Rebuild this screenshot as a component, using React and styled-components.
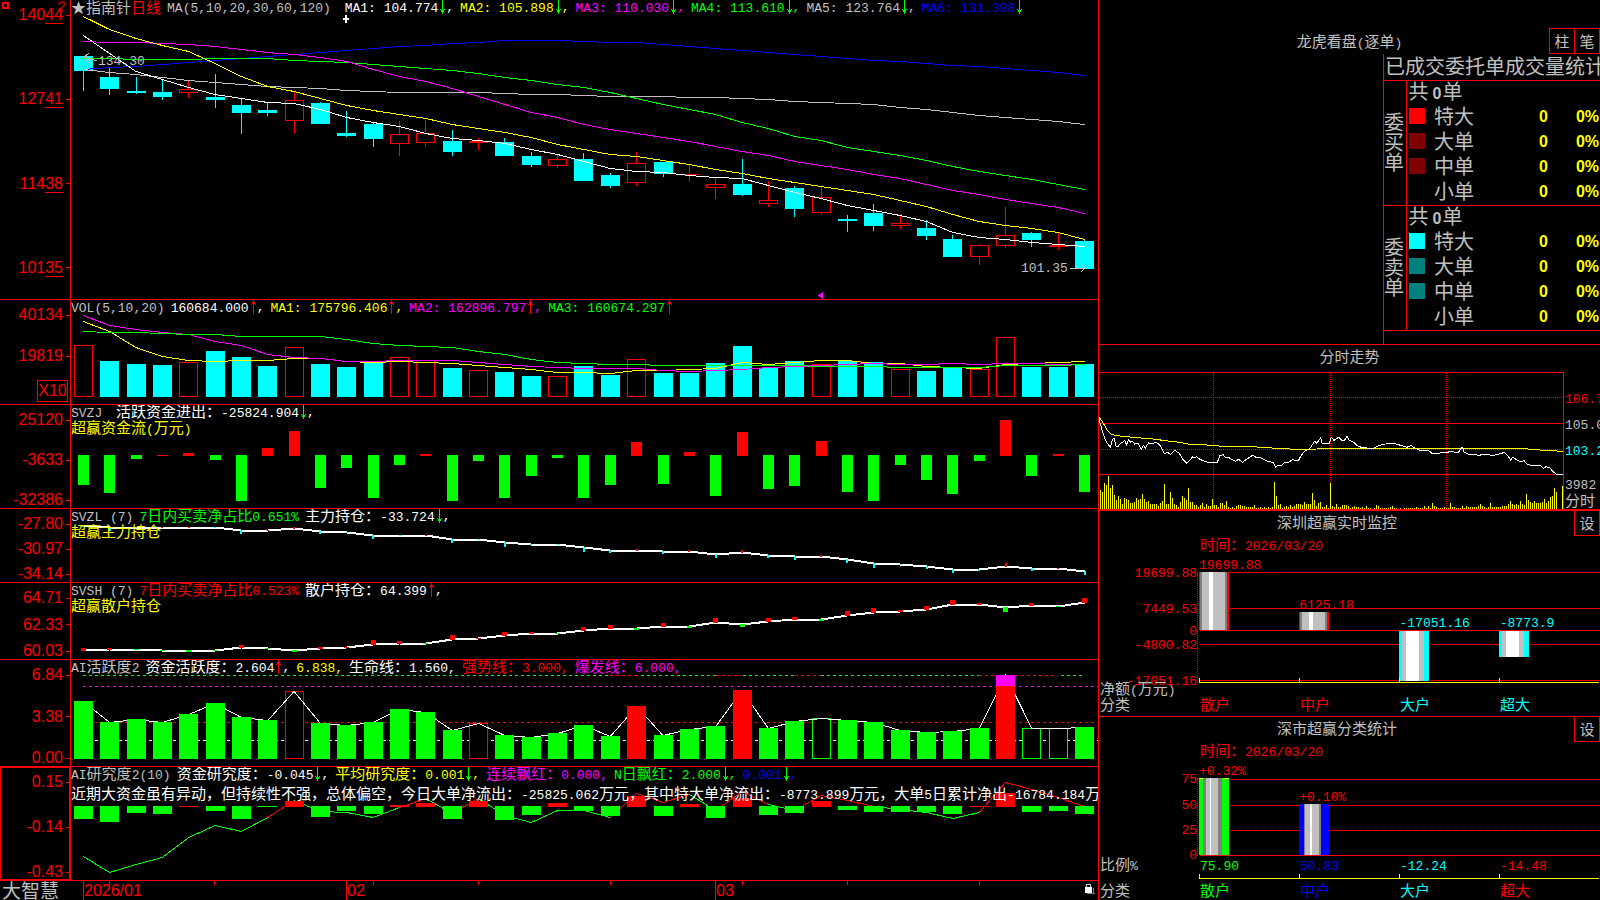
import styled, { createGlobalStyle } from "styled-components"

const GlobalStyle = createGlobalStyle`
  * {
    box-sizing: border-box;
  }
  body {
    margin: 0;
    background-color: #000;
    color: #c0c0c0;
    font-family: "Noto Sans CJK SC", sans-serif;
    font-size: 15px;
    line-height: 15px;
    overflow-x: hidden;
  }
`;

const Page = styled.div`
  display: grid;
  grid-template-columns: minmax(0, 1099fr) minmax(0, 501fr);
  width: 100%;
`;

const Left = styled.main`
  border-right: 1px solid #f00;
`;

const Right = styled.aside`
  display: flex;
  flex-direction: column;
`;

// left side

const ChartRow = styled.section`
  display: grid;
  grid-template-columns: 71px minmax(0, 1fr);
  height: ${(p) => p.$height}px;
  border-bottom: 1px solid #f00;
`;

const Axis = styled.div`
  position: relative;
  display: flex;
  flex-direction: column;
  justify-content: ${(p) => (p.$gap ? "flex-start" : "space-between")};
  gap: ${(p) => p.$gap || 0}px;
  padding: 7px 0 ${(p) => p.$bottom || 0}px;
  border-right: 1px solid #f00;
  box-shadow: ${(p) => (p.$active ? "inset 0 0 0 1px #f00" : "none")};
`;

const AxisLabel = styled.div`
  display: flex;
  align-items: center;
  justify-content: flex-end;
  height: 16px;
  color: #f00;
  font-family: "Liberation Sans", sans-serif;
  font-size: 16px;
  line-height: 18px;

  u {
    text-decoration: none;
    border-bottom: 1px solid #f00;
  }

  &::after {
    content: "";
    width: 4px;
    height: 1px;
    margin-left: 3px;
    background-color: #f00;
  }
`;

const Unit = styled.div`
  align-self: flex-end;
  width: 31px;
  height: 22px;
  margin: -9px 2px 0 0;
  border: 1px solid #f00;
  color: #f00;
  font-family: "Liberation Sans", sans-serif;
  font-size: 16px;
  line-height: 20px;
  text-align: center;
`;

const Corner = styled.div`
  position: absolute;
  top: 2px;
  left: 2px;
  width: 7px;
  height: 7px;
  border: 2px solid #f00;
`;

const Help = styled.div`
  position: absolute;
  top: 1px;
  left: 57px;
  color: #a00000;
  font-family: "Liberation Mono", monospace;
  font-size: 16px;
  font-weight: bold;
`;

const Plot = styled.div`
  position: relative;
  overflow: hidden;
`;

const Canvas = styled.svg`
  position: absolute;
  inset: 0;
  width: 100%;
  height: 100%;
  shape-rendering: crispEdges;
`;

const Captions = styled.div`
  position: relative;
  display: flex;
  gap: 6px;
  height: 14px;
  line-height: 14px;
  white-space: pre;
`;

const Caption = styled.span`
  display: flex;
  align-items: center;
  color: ${(p) => p.$color || "#c0c0c0"};
`;

const SubCaption = styled.div`
  position: relative;
  margin-top: ${(p) => p.$gap || 0}px;
  color: ${(p) => p.$color};
  white-space: nowrap;
`;

const Latin = styled.span`
  font-family: "Liberation Mono", monospace;
  font-size: 13px;
  line-height: 13px;
`;

const ArrowIcon = styled.svg`
  flex: none;
  width: 8px;
  height: 14px;
  shape-rendering: crispEdges;
`;

const PriceTag = styled.div`
  position: absolute;
  top: ${(p) => p.$top}px;
  left: ${(p) => p.$left};
  display: flex;
  align-items: center;
`;

const TimeRow = styled.footer`
  display: grid;
  grid-template-columns: 71px minmax(0, 1fr);
  height: 19px;
`;

const Brand = styled.div`
  padding-left: 2px;
  font-size: 19px;
  line-height: 17px;
  white-space: nowrap;
`;

const Months = styled.div`
  position: relative;
  display: grid;
  grid-template-columns: 12fr 263fr 369fr 369fr 14px;
`;

const Month = styled.div`
  border-left: 1px solid #f00;
  color: #f00;
  font-family: "Liberation Sans", sans-serif;
  font-size: 16px;
  line-height: 19px;
`;

const LockIcon = styled.svg`
  width: 11px;
  height: 12px;
  margin-top: 2px;
`;

// right side

const OrderPanel = styled.section`
  height: 345px;
  padding-top: 28px;
  border-bottom: 1px solid #f00;
  display: flex;
  flex-direction: column;
  overflow: hidden;
`;

const TitleBar = styled.div`
  display: grid;
  align-items: start;
  height: 26px;
  grid-template-columns: ${(p) => (p.$split ? "minmax(0, 1fr) auto" : "minmax(0, 1fr)")};
`;

const Title = styled.h2`
  margin: 0;
  font-size: 15px;
  font-weight: normal;
  line-height: ${(p) => (p.$over ? 26 : 22)}px;
  text-align: center;
  ${(p) => p.$over && "grid-area: 1 / 1;"}
`;

const Buttons = styled.div`
  display: flex;
  justify-self: end;
  ${(p) => p.$over && "grid-area: 1 / 1;"}
`;

const Button = styled.button`
  width: 26px;
  height: 26px;
  margin-left: -1px;
  padding: 0;
  border: 1px solid #f00;
  background-color: #000;
  color: #c0c0c0;
  font-family: inherit;
  font-size: 15px;
  line-height: 20px;
  cursor: pointer;
`;

const FundButton = styled(Button)`
  margin-top: -1px;
`;

const Orders = styled.div`
  flex: 1;
  align-self: flex-end;
  width: 217px;
  border-left: 1px solid #f00;
`;

const OrdersTitle = styled.h3`
  height: 26px;
  margin: 0;
  padding-left: 1px;
  font-size: 20px;
  font-weight: normal;
  line-height: 24px;
  white-space: nowrap;
`;

const OrderTable = styled.table`
  width: 100%;
  table-layout: fixed;
  border-collapse: collapse;

  td, th {
    height: 25px;
    padding: 0;
    font-size: 20px;
    font-weight: normal;
    line-height: 20px;
    text-align: left;
    vertical-align: top;
  }

  tbody {
    border-top: 1px solid #f00;
    border-bottom: 1px solid #f00;
  }
`;

const Side = styled.th`
  border-right: 1px solid #f00;

  && {
    padding-top: 31px;
  }

  span {
    display: block;
    width: 20px;
    line-height: 20px;
  }
`;

const Total = styled.td`
  && {
    padding-left: 2px;
  }

  span {
    padding: 0 1px 0 4px;
    font-family: "Liberation Sans", sans-serif;
    font-size: 16px;
    font-weight: bold;
    line-height: 16px;
  }
`;

const Num = styled.td`
  && {
    color: #ff0;
    font-family: "Liberation Sans", sans-serif;
    font-size: 16px;
    font-weight: bold;
    line-height: 22px;
    text-align: right;
  }

  &:last-child {
    padding-right: 1px;
  }
`;

const Swatch = styled.i`
  display: block;
  width: 16px;
  height: 16px;
  margin: 2px 0 0 2px;
  background-color: ${(p) => p.$color};
`;

const TrendPanel = styled.section`
  height: 166px;
  border-bottom: 2px solid #f00;
`;

const TrendBody = styled.div`
  display: grid;
  grid-template-columns: minmax(0, 1fr) 36px;
  height: 137px;
  margin-top: 1px;
`;

const TrendPlot = styled.div`
  position: relative;
  border: 1px solid #f00;
  border-width: 1px 1px 0 0;
`;

const TrendScale = styled.div`
  display: grid;
  grid-template-rows: 26px 26px 34px 17px;
  padding: 17px 0 0 1px;
  overflow: hidden;
  white-space: nowrap;
`;

const Tint = styled.span`
  color: ${(p) => p.$color};
`;

const FundPanel = styled.section`
  border-bottom: ${(p) => (p.$last ? "none" : "1px solid #f00")};
  height: ${(p) => p.$height}px;
  overflow: hidden;
`;

const DateLine = styled.div`
  height: 16px;
  padding-left: 101px;
  color: #f00;
  line-height: 14px;
`;

const FundBody = styled.div`
  display: grid;
  grid-template-columns: 98px minmax(0, 1fr);
  margin-top: ${(p) => p.$gap}px;
`;

const FundScale = styled.div`
  display: grid;
  height: 0;
  grid-template-rows: ${(p) => p.$rows};
  margin-top: -9px;
  color: #f00;
  text-align: right;
  line-height: 16px;
`;

const FundPlot = styled.div`
  position: relative;
  height: ${(p) => p.$height}px;
  border-left: 1px dotted #f00;
`;

const Tags = styled.div`
  position: absolute;
  inset: 0;
  display: grid;
  grid-template-columns: repeat(4, minmax(0, 1fr));
  padding-left: 1px;
`;

const Tag = styled.span`
  margin-top: ${(p) => p.$top}px;
  color: ${(p) => p.$color};
`;

const Legend = styled.div`
  display: grid;
  grid-template-columns: 101px minmax(0, 1fr);
  height: 16px;
  line-height: 14px;
  margin-top: ${(p) => p.$gap || 0}px;
  white-space: nowrap;
`;

const LegendName = styled.span`
  position: relative;
  padding-left: 1px;
`;

const Cells = styled.div`
  display: grid;
  grid-template-columns: repeat(4, minmax(0, 1fr));
`;

const Ruler = styled.svg`
  display: block;
  width: 100%;
  height: 5px;
  shape-rendering: crispEdges;
`;

const RulerBox = styled.div`
  position: relative;
  margin: ${(p) => p.$gap || 0}px 0 0 100px;
`;

// data

const CYAN = "#0ff";
const RED = "#f00";
const LIME = "#0f0";
const PINK = "#f0f";
const YELLOW = "#ff0";
const WHITE = "#fff";
const BLUE = "#00f";
const GREY = "#c0c0c0";
const DARK = "#808080";

// [up, high, top, bottom, low]
const candles = [
  [0, 56, 56, 71, 91], [0, 68, 77, 89, 95], [0, 77, 91, 93, 94], [0, 79, 92, 97, 100],
  [1, 81, 89, 93, 98], [0, 74, 97, 100, 108], [0, 99, 105, 113, 134], [0, 103, 110, 113, 116],
  [1, 91, 100, 121, 133], [0, 102, 103, 124, 124], [0, 111, 133, 136, 137], [0, 122, 124, 139, 147],
  [1, 121, 134, 144, 156], [1, 120, 133, 143, 147], [0, 130, 141, 152, 156], [1, 138, 141, 143, 150],
  [0, 138, 142, 156, 156], [0, 152, 156, 165, 167], [1, 154, 159, 166, 168], [0, 153, 159, 181, 181],
  [0, 173, 175, 186, 188], [1, 152, 163, 183, 186], [0, 162, 162, 174, 177], [1, 164, 174, 175, 182],
  [1, 178, 184, 188, 199], [0, 159, 184, 195, 196], [1, 181, 200, 204, 207], [0, 186, 188, 209, 217],
  [1, 186, 197, 213, 215], [0, 215, 219, 221, 232], [0, 204, 213, 226, 231], [1, 214, 223, 226, 229],
  [0, 220, 228, 236, 240], [0, 235, 239, 257, 257], [1, 244, 245, 257, 265], [1, 207, 235, 246, 248],
  [0, 232, 233, 240, 247], [1, 232, 245, 247, 250], [0, 239, 241, 269, 269],
];

const maLines = [
  [BLUE, [69, 67, 66, 64, 62, 60, 58, 56, 54, 52, 50, 48, 46, 45, 43, 42, 40, 40, 40, 41, 42, 42, 44, 46, 48, 50, 52, 54, 56, 58, 60, 61, 63, 65, 66, 68, 70, 72, 75]],
  [GREY, [69, 72, 74, 77, 80, 82, 84, 86, 87, 88, 90, 91, 92, 92, 92, 92, 93, 94, 94, 95, 96, 96, 96, 97, 97, 98, 99, 101, 102, 103, 104, 107, 109, 112, 115, 117, 119, 121, 124]],
  [LIME, [58, 58, 59, 59, 59, 58, 58, 58, 60, 61, 62, 64, 66, 68, 70, 73, 77, 80, 84, 87, 92, 98, 104, 109, 114, 122, 128, 136, 140, 147, 151, 155, 160, 166, 171, 175, 179, 184, 189]],
  [PINK, [41, 42, 42, 43, 44, 46, 49, 52, 54, 57, 61, 69, 76, 81, 88, 96, 104, 112, 117, 124, 129, 133, 137, 141, 146, 151, 155, 161, 165, 169, 174, 178, 184, 190, 194, 199, 203, 207, 213]],
  [YELLOW, [16, 29, 38, 45, 51, 63, 76, 86, 91, 98, 105, 110, 114, 118, 124, 128, 132, 137, 144, 149, 154, 156, 160, 164, 169, 173, 178, 182, 186, 190, 194, 200, 206, 214, 221, 225, 228, 232, 239]],
  [WHITE, [35, 53, 71, 79, 87, 94, 98, 102, 103, 109, 117, 122, 126, 133, 138, 140, 143, 149, 154, 161, 168, 171, 172, 175, 177, 178, 185, 192, 198, 205, 210, 215, 221, 232, 237, 239, 242, 244, 246]],
];

const volumes = [45, 61, 64, 65, 62, 51, 57, 66, 47, 64, 67, 63, 57, 60, 68, 70, 72, 76, 76, 66, 75, 59, 73, 73, 63, 46, 68, 61, 64, 61, 62, 69, 71, 68, 69, 37, 67, 67, 64];
const volumeUp = [0, 4, 8, 12, 13, 15, 18, 21, 28, 31, 34, 35];
const volumeLines = [
  [YELLOW, [21, 31, 47, 56, 60, 61, 60, 60, 58, 58, 61, 62, 61, 62, 63, 65, 67, 69, 72, 72, 73, 70, 70, 69, 68, 62, 64, 62, 60, 60, 63, 63, 66, 67, 68, 64, 63, 62, 61]],
  [PINK, [15, 25, 29, 32, 34, 41, 45, 54, 57, 58, 61, 61, 60, 60, 60, 62, 64, 66, 67, 68, 68, 68, 70, 71, 70, 69, 67, 66, 65, 64, 63, 64, 64, 63, 64, 63, 63, 64, 64]],
  [LIME, [31, 32, 32, 33, 34, 34, 36, 36, 36, 36, 39, 43, 45, 46, 47, 51, 54, 59, 62, 63, 64, 64, 65, 65, 65, 65, 65, 65, 66, 66, 66, 67, 67, 67, 67, 65, 65, 65, 64]],
];

const flows = [-30, -38, -4, 1, 3, -5, -46, 8, 25, -33, -13, -43, -10, 2, -46, -6, -43, -21, -3, -43, -30, 14, -29, 4, -41, 24, -34, -31, 15, -37, -46, -10, -25, -39, -6, 36, -21, 2, -37];

const mainHold = [16, 18, 18, 18, 18, 18, 21, 21, 19, 22, 23, 26, 26, 26, 30, 30, 33, 35, 35, 38, 41, 41, 42, 42, 45, 43, 46, 47, 47, 50, 54, 55, 57, 60, 60, 57, 59, 59, 62];
const mainMarks = [-2, -4, -1, 1, 1, -1, -4, 1, 2, -3, -1, -4, -1, 1, -4, -1, -5, -1, -1, -5, -3, 2, -3, 2, -4, 3, -3, -4, 2, -4, -5, -1, -3, -4, -2, 4, -3, 1, -4];
const retailHold = [67, 66, 66, 67, 67, 67, 64, 65, 67, 65, 64, 61, 60, 60, 56, 55, 52, 50, 50, 47, 45, 45, 43, 43, 39, 41, 38, 36, 36, 32, 29, 28, 26, 21, 21, 24, 22, 23, 19];
const retailMarks = [3, 2, -1, -1, -2, -1, 3, -1, -2, 2, 1, 5, 3, -1, 5, 1, 4, 2, -1, 4, 4, -2, 4, -2, 5, -3, 4, 3, -2, 5, 5, 2, 4, 5, 2, -5, 3, -1, 5];

const active = [41, 62, 59, 62, 54, 43, 57, 60, 31, 63, 65, 62, 49, 52, 70, 63, 75, 77, 73, 65, 76, 46, 75, 69, 66, 30, 68, 61, 58, 60, 62, 70, 72, 71, 68, 15, 68, 68, 67];
const activeHollow = { 8: RED, 15: RED, 28: LIME, 36: LIME, 37: LIME };
const activeRed = [21, 25, 35];

const research = [-13, -16, -7, -8, 1, -5, -13, -1, 6, -11, -5, -8, 2, 4, -13, 6, -14, -9, 4, -5, -10, 11, -10, 3, -12, 9, -9, -7, 6, -4, -6, -6, -6, -8, 1, 14, -6, -5, -8];
const researchLine = [89, 105, 97, 90, 70, 58, 64, 50, 33, 44, 45, 50, 40, 31, 46, 31, 48, 55, 43, 43, 50, 26, 35, 27, 43, 24, 37, 43, 28, 33, 39, 42, 45, 51, 45, 15, 22, 30, 39];
const researchRed = [7, 12, 14, 20, 21, 22, 24, 25, 27, 28, 29, 34, 35, 36, 37];

const price = "27,230 30,248 36,270 45,298 54,313 61,322 67,298 72,295 78,319 84,319 92,310 98,307 104,301 110,315 115,299 122,307 128,304 134,312 144,310 154,328 160,316 166,324 176,308 184,312 196,307 206,312 214,322 222,340 234,338 242,344 254,331 268,340 280,360 290,370 300,360 308,350 314,353 320,350 330,358 344,364 358,368 372,366 382,367 390,346 400,344 406,353 416,352 424,358 436,364 446,358 458,367 466,360 476,354 488,346 498,352 510,353 522,358 534,364 550,368 557,381 564,376 574,376 584,368 598,366 608,358 618,362 626,360 634,346 644,334 656,328 662,322 674,304 680,310 692,294 696,310 706,312 718,310 724,292 732,301 746,292 756,301 764,300 771,289 778,301 790,306 800,316 814,322 830,324 852,324 864,318 880,313 900,310 914,311 932,316 950,322 964,317 974,324 988,330 1000,333 1014,330 1026,340 1040,342 1054,338 1070,338 1084,333 1096,338 1106,336 1116,320 1122,336 1134,342 1156,342 1168,348 1176,342 1192,344 1210,346 1228,342 1244,337 1254,348 1262,360 1268,352 1278,358 1292,365 1302,362 1310,372 1330,378 1350,376 1360,385 1368,380 1380,384 1388,394 1398,402 1408,403 1419,403";
const average = "27,230 40,250 54,274 66,284 90,288 130,292 190,297 240,304 270,307 300,313 350,315 400,319 500,321 560,325 620,328 680,327 700,325 1000,325 1300,326 1330,328 1360,331 1400,333 1419,334";
const ticks = [
  57, 51, 77, 71, 99, 63, 71, 41, 27, 39, 29, 15, 33, 31, 27, 18, 18, 21, 33, 27, 29, 45, 29, 21, 23, 15, 15, 15, 15, 9, 17, 24, 75, 15, 15, 51, 33, 15, 12, 7,
  21, 39, 33, 27, 63, 21, 21, 12, 12, 7, 12, 18, 7, 15, 9, 9, 30, 12, 12, 7, 18, 18, 12, 24, 5, 3, 7, 3, 9, 12, 12, 9, 9, 6, 6, 6, 6, 12, 3, 3,
  6, 3, 6, 3, 6, 3, 6, 81, 39, 12, 15, 3, 6, 9, 6, 12, 6, 9, 15, 15, 15, 12, 21, 15, 15, 15, 48, 27, 9, 18, 21, 6, 6, 12, 3, 77,
  9, 6, 15, 6, 6, 12, 12, 12, 9, 3, 6, 9, 6, 6, 3, 6, 3, 9, 3, 3, 0, 3, 12, 9, 3, 3, 3, 3, 3, 6, 9, 3, 3, 0, 3, 0, 3, 3, 3, 3,
  3, 3, 6, 3, 3, 3, 9, 3, 9, 3, 18, 9, 6, 3, 3, 3, 6, 3, 3, 18, 6, 6, 3, 3, 3, 9, 3, 9, 6, 6, 6, 6, 6, 9, 15, 9, 6, 3, 6, 18, 6, 6,
  6, 6, 6, 9, 9, 9, 15, 24, 15, 12, 15, 12, 24, 15, 12, 45, 27, 21, 18, 24, 18, 18, 18, 21, 30, 18, 24, 36, 39, 63, 51, 0, 0, 69,
];

const x = (i) => 12.3 + i * 26.35;
const path = (ys, from = 0) => ys.map((y, i) => `${x(i + from)},${y + 0.5}`).join(" ");

// splits a string so half-width runs get the monospaced face
const Text = ({ children }) =>
  children.split(/([\x20-\x7e]+)/).map((part, i) => (i % 2 ? <Latin key={i}>{part}</Latin> : part));

const Arrow = ({ up }) => (
  <ArrowIcon viewBox="0 0 8 14" fill={up ? RED : LIME}>
    <rect x="4" width="1" height="14" />
    {up ? <path d="M3 2h3v2h-3zM2 4h1v1h-1zM6 4h1v1h-1z" /> : <path d="M3 10h3v2h-3zM2 9h1v1h-1zM6 9h1v1h-1z" />}
  </ArrowIcon>
);

const CaptionLine = ({ lead, items }) => (
  <Captions>
    {lead}
    {items.map(([text, color, arrow, tail]) => (
      <Caption key={text} $color={color}>
        <span><Text>{text}</Text></span>
        {arrow && <Arrow up={arrow === "up"} />}
        {tail && <Latin>{tail}</Latin>}
      </Caption>
    ))}
  </Captions>
);

const Chart = ({ height, children }) => (
  <Canvas viewBox={`0 0 1027 ${height}`} preserveAspectRatio="none" fill="none">
    {children}
  </Canvas>
);

const Lines = ({ lines }) => lines.map(([color, ys]) => <polyline key={color} points={path(ys)} stroke={color} />);

const Bar = ({ i, top, bottom, color, hollow, width = 19 }) => {
  const left = Math.round(x(i) - width / 2);
  return hollow ? (
    <rect x={left + 0.5} y={top + 0.5} width={width - 1} height={Math.max(bottom - top - 1, 1)} stroke={color} fill="#000" />
  ) : (
    <rect x={left} y={top} width={width} height={Math.max(bottom - top, 1)} fill={color} />
  );
};

const SignedBars = ({ values, zero, width }) =>
  values.map((v, i) => (
    <Bar key={i} i={i} width={width} color={v > 0 ? RED : LIME} top={v > 0 ? zero - v + 1 : zero} bottom={v > 0 ? zero + 1 : zero - v} />
  ));

const Marks = ({ line, marks, width, down }) =>
  marks.map((m, i) => (
    <Bar key={i} i={i} width={width} color={m > 0 ? RED : down} top={m > 0 ? line[i] - m + 1 : line[i]} bottom={m > 0 ? line[i] + 1 : line[i] - m} />
  ));

const Scale = ({ labels }) => labels.map((l) => <AxisLabel key={l}>{l}</AxisLabel>);

const PricePanel = () => (
  <ChartRow $height={300}>
    <Axis $bottom={23}>
      <Corner />
      <Help>?</Help>
      <AxisLabel><span>140<u>44</u></span></AxisLabel>
      <AxisLabel><span>127<u>41</u></span></AxisLabel>
      <AxisLabel><span>114<u>38</u></span></AxisLabel>
      <AxisLabel><span>101<u>35</u></span></AxisLabel>
    </Axis>
    <Plot>
      <Chart height={299}>
        {candles.map(([up, high, top, bottom, low], i) => {
          const cx = Math.round(x(i) - 0.5) + 0.5;
          return (
            <g key={i}>
              <line x1={cx} x2={cx} y1={high} y2={low} stroke={up ? RED : CYAN} />
              <Bar i={i} top={top} bottom={bottom} color={up ? RED : CYAN} hollow={up && bottom - top > 2} />
            </g>
          );
        })}
        <Lines lines={maLines} />
        <path d="M275 15v8M272 19h6" stroke={WHITE} strokeWidth="2" />
        <path d="M13 57l13 4M13 57l5-4M13 57l5 6" stroke={GREY} />
        <path d="M999 268.5h15M1010 264l4 4l-4 4" stroke={GREY} />
        <path d="M747 295.5l5-4v8z" fill={PINK} />
      </Chart>
      <CaptionLine
        lead={<Caption>★指南针<Tint $color={RED}>日线</Tint></Caption>}
        items={[
          ["MA(5,10,20,30,60,120) ", GREY],
          ["MA1: 104.774", WHITE, "down", ","],
          ["MA2: 105.898", YELLOW, "down", ","],
          ["MA3: 110.030", PINK, "down", ","],
          ["MA4: 113.610", LIME, "down", ","],
          ["MA5: 123.764", GREY, "down", ","],
          ["MA6: 131.398", BLUE, "down"],
        ]}
      />
      <PriceTag $top={55} $left="27px"><Latin>134.30</Latin></PriceTag>
      <PriceTag $top={262} $left="92.5%"><Latin>101.35</Latin></PriceTag>
    </Plot>
  </ChartRow>
);

const VolumePanel = () => (
  <ChartRow $height={105}>
    <Axis $gap={25}>
      <Scale labels={["40134", "19819"]} />
      <Unit>X10</Unit>
    </Axis>
    <Plot>
      <Chart height={104}>
        {volumes.map((v, i) => {
          const up = volumeUp.includes(i);
          return <Bar key={i} i={i} top={v} bottom={97} color={up ? RED : CYAN} hollow={up} />;
        })}
        <Lines lines={volumeLines} />
      </Chart>
      <CaptionLine
        items={[
          ["VOL(5,10,20)", GREY],
          ["160684.000", WHITE, "up", ","],
          ["MA1: 175796.406", YELLOW, "up", ","],
          ["MA2: 162896.797", PINK, "up", ","],
          ["MA3: 160674.297", LIME, "up"],
        ]}
      />
    </Plot>
  </ChartRow>
);

const FlowPanel = () => (
  <ChartRow $height={104}>
    <Axis><Scale labels={["25120", "-3633", "-32386"]} /></Axis>
    <Plot>
      <Chart height={103}>
        <SignedBars values={flows} zero={50} width={11} />
      </Chart>
      <CaptionLine items={[["SVZJ ", GREY], ["活跃资金进出：-25824.904", WHITE, "down", ","]]} />
      <SubCaption $color={YELLOW}><Text>超赢资金流(万元)</Text></SubCaption>
    </Plot>
  </ChartRow>
);

const MainHoldPanel = () => (
  <ChartRow $height={74}>
    <Axis><Scale labels={["-27.80", "-30.97", "-34.14"]} /></Axis>
    <Plot>
      <Chart height={73}>
        <polyline points={path(mainHold)} stroke={WHITE} strokeWidth="2" />
        <Marks line={mainHold} marks={mainMarks} width={2} down={CYAN} />
      </Chart>
      <CaptionLine items={[["SVZL (7)", GREY], ["7日内买卖净占比0.651%", LIME], ["主力持仓：-33.724", WHITE, "down", ","]]} />
      <SubCaption $color={YELLOW}>超赢主力持仓</SubCaption>
    </Plot>
  </ChartRow>
);

const RetailHoldPanel = () => (
  <ChartRow $height={77}>
    <Axis><Scale labels={["64.71", "62.33", "60.03"]} /></Axis>
    <Plot>
      <Chart height={76}>
        <polyline points={path(retailHold)} stroke={WHITE} strokeWidth="2" />
        <Marks line={retailHold} marks={retailMarks} width={5} down={LIME} />
      </Chart>
      <CaptionLine items={[["SVSH (7)", GREY], ["7日内买卖净占比0.523%", RED], ["散户持仓：64.399", WHITE, "up", ","]]} />
      <SubCaption $color={YELLOW}>超赢散户持仓</SubCaption>
    </Plot>
  </ChartRow>
);

const ActivePanel = () => (
  <ChartRow $height={107}>
    <Axis><Scale labels={["6.84", "3.38", "0.00"]} /></Axis>
    <Plot>
      <Chart height={106}>
        <g strokeDasharray="3 3">
          <path d={`M12 15.5H${x(38)}`} stroke={LIME} />
          {[[20, 21], [24, 25], [27, 28], [34, 37]].map(([a, b]) => (
            <g key={a}>
              <path d={`M${x(a)} 15.5H${x(b)}`} stroke="#000" strokeDasharray="none" />
              <path d={`M${x(a)} 15.5H${x(b)}`} stroke={RED} />
            </g>
          ))}
          <path d="M12 26.5H1027" stroke={PINK} />
          <path d="M12 62.5H1027" stroke={RED} />
          <path d="M12 80.5H1027" stroke={WHITE} />
        </g>
        {active.map((v, i) => activeHollow[i] && <Bar key={i} i={i} top={v} bottom={99} color={activeHollow[i]} hollow />)}
        <polyline points={path(active)} stroke={WHITE} />
        {active.map((v, i) => !activeHollow[i] && <Bar key={i} i={i} top={v} bottom={99} color={activeRed.includes(i) ? RED : LIME} />)}
        <Bar i={35} top={15} bottom={26} color={PINK} />
      </Chart>
      <CaptionLine
        items={[
          ["AI活跃度2", GREY],
          ["资金活跃度：2.604", WHITE, "up", ","],
          ["6.838,", YELLOW],
          ["生命线：1.560,", WHITE],
          ["强势线：3.000,", RED],
          ["爆发线：6.000,", PINK],
        ]}
      />
    </Plot>
  </ChartRow>
);

const ResearchPanel = () => (
  <ChartRow $height={114}>
    <Axis $active><Scale labels={["0.15", "-0.14", "-0.43"]} /></Axis>
    <Plot>
      <Chart height={113}>
        {researchLine.slice(1).map((y, i) => (
          <polyline key={i} points={path([researchLine[i], y], i)} stroke={researchRed.includes(i) ? RED : LIME} />
        ))}
        <SignedBars values={research} zero={39} />
      </Chart>
      <CaptionLine
        items={[
          ["AI研究度2(10)", GREY],
          ["资金研究度：-0.045", WHITE, "down", ","],
          ["平均研究度：0.001", YELLOW, "down", ","],
          ["连续飘红：0.000,", PINK],
          ["N日飘红：2.000", LIME, "down", ","],
          ["0.001", BLUE, "down", ","],
        ]}
      />
      <SubCaption $color={WHITE} $gap={4}>
        <Text>近期大资金虽有异动，但持续性不强，总体偏空，今日大单净流出：-25825.062万元，其中特大单净流出：-8773.899万元，大单5日累计净出-16784.184万元</Text>
      </SubCaption>
    </Plot>
  </ChartRow>
);

const TimeAxis = () => (
  <TimeRow>
    <Brand>大智慧</Brand>
    <Months>
      <Canvas viewBox="0 0 1027 19" preserveAspectRatio="none" fill={RED}>
        {[38, 143, 302, 407, 539, 671, 776, 908].map((t) => <rect key={t} x={t} width="1" height="4" />)}
      </Canvas>
      <span />
      <Month>2026/01</Month>
      <Month>02</Month>
      <Month>03</Month>
      <LockIcon viewBox="0 0 11 12" shapeRendering="crispEdges">
        <path d="M2.5 4V1.5h4V4" fill="none" stroke={GREY} />
        <rect x="3" y="10" width="8" height="1" fill={DARK} />
        <rect x="9" y="5" width="1" height="6" fill={DARK} />
        <rect x="1" y="4" width="7" height="6" fill={WHITE} />
      </LockIcon>
    </Months>
  </TimeRow>
);

const orderGroups = [
  ["委买单", [["特大", "#f00"], ["大单", "#800000"], ["中单", "#800000"], ["小单", "#000"]]],
  ["委卖单", [["特大", "#0ff"], ["大单", "#008080"], ["中单", "#008080"], ["小单", "#000"]]],
];

const OrderStats = () => (
  <OrderPanel>
    <TitleBar>
      <Title $over><Text>龙虎看盘(逐单)</Text></Title>
      <Buttons $over>
        <Button type="button">柱</Button>
        <Button type="button">笔</Button>
      </Buttons>
    </TitleBar>
    <Orders>
      <OrdersTitle id="orders">已成交委托单成交量统计</OrdersTitle>
      <OrderTable aria-labelledby="orders">
        <colgroup>
          <col style={{ width: 22 }} />
          <col style={{ width: 28 }} />
          <col style={{ width: 62 }} />
          <col />
          <col />
        </colgroup>
        {orderGroups.map(([side, rows]) => (
          <tbody key={side}>
            <tr>
              <Side rowSpan={5} scope="rowgroup">{side.split("").map((c) => <span key={c}>{c}</span>)}</Side>
              <Total colSpan={4}>共<span>0</span>单</Total>
            </tr>
            {rows.map(([name, color]) => (
              <tr key={name}>
                <td><Swatch $color={color} /></td>
                <td>{name}</td>
                <Num>0</Num>
                <Num>0%</Num>
              </tr>
            ))}
          </tbody>
        ))}
      </OrderTable>
    </Orders>
  </OrderPanel>
);

const Trend = () => (
  <TrendPanel>
    <TitleBar><Title>分时走势</Title></TitleBar>
    <TrendBody>
      <TrendPlot>
        <Canvas viewBox="27 99 1392 408" preserveAspectRatio="none" fill="none">
          <path d="M27 250H1419M27 403H1419" stroke={RED} strokeWidth="3" />
          <path d="M27 172H1419M27 328H1419M370 99V507M721 99V507M1069 99V507" stroke={RED} strokeWidth="3" strokeDasharray="3 3" />
          {ticks.map((t, i) => <rect key={i} x={30 + i * 6} y={507 - t} width="3" height={t} fill={YELLOW} />)}
          <polyline points={average} stroke={YELLOW} strokeWidth="3" />
          <polyline points={price} stroke={WHITE} strokeWidth="3" />
        </Canvas>
      </TrendPlot>
      <TrendScale>
        <Tint $color={RED}><Text>106.7</Text></Tint>
        <Tint $color={GREY}><Text>105.0</Text></Tint>
        <Tint $color={CYAN}><Text>103.2</Text></Tint>
        <Tint $color={GREY}><Text>3982</Text></Tint>
        <Tint $color={GREY}>分时</Tint>
      </TrendScale>
    </TrendBody>
  </TrendPanel>
);

// [width, colour] strips from left to right, in thirds of a unit
const shades = {
  red: [[3, RED], [6, DARK], [21, GREY], [12, WHITE], [36, GREY], [6, DARK], [6, RED]],
  cyan: [[9, CYAN], [12, GREY], [39, WHITE], [15, GREY], [15, CYAN]],
  green: [[12, LIME], [9, DARK], [12, GREY], [3, WHITE], [21, GREY], [12, DARK], [21, LIME]],
  blue: [[15, BLUE], [3, DARK], [15, GREY], [6, WHITE], [21, GREY], [6, DARK], [24, BLUE]],
};

const Cylinder = ({ slot, top, bottom, shade }) => {
  let left = 1 + slot * 100;
  return shades[shade].map(([w, color], i) => {
    const strip = <rect key={i} x={left} y={top} width={w / 3} height={bottom - top} fill={color} />;
    left += w / 3;
    return strip;
  });
};

const AxisRuler = ({ gap }) => (
  <RulerBox $gap={gap}>
    <Ruler viewBox="0 0 401 5" preserveAspectRatio="none" fill={YELLOW}>
      <path d="M0 0h1v4H0zM100 0h1v4h-1zM200 0h1v4h-1zM300 0h1v4h-1zM0 4h400v1H0z" />
    </Ruler>
  </RulerBox>
);

const NetPanel = () => (
  <FundPanel $height={206}>
    <TitleBar $split>
      <Title>深圳超赢实时监控</Title>
      <FundButton type="button">设</FundButton>
    </TitleBar>
    <DateLine><Text>时间：2026/03/20</Text></DateLine>
    <FundBody $gap={19}>
      <FundScale $rows="36px 22px 14px 36px 16px">
        {["19699.88", "7449.53", "0", "-4800.82", "-17051.16"].map((l) => <span key={l}><Latin>{l}</Latin></span>)}
      </FundScale>
      <FundPlot $height={110}>
        <Canvas viewBox="0 0 402 110" preserveAspectRatio="none">
          <path d="M2 .5H402M2 36.5H402M2 72.5H402M2 108.5H402" stroke={RED} strokeDasharray="1 1" />
          <path d="M2 58.5H402" stroke={RED} />
          <Cylinder slot={0} top={0} bottom={58} shade="red" />
          <Cylinder slot={1} top={40} bottom={58} shade="red" />
          <Cylinder slot={2} top={59} bottom={109} shade="cyan" />
          <Cylinder slot={3} top={59} bottom={85} shade="cyan" />
        </Canvas>
        <Tags>
          <Tag $color={RED} $top={-17}><Latin>19699.88</Latin></Tag>
          <Tag $color={RED} $top={23}><Latin>6125.18</Latin></Tag>
          <Tag $color={CYAN} $top={41}><Latin>-17051.16</Latin></Tag>
          <Tag $color={CYAN} $top={41}><Latin>-8773.9</Latin></Tag>
        </Tags>
      </FundPlot>
    </FundBody>
    <AxisRuler gap={-4} />
    <Legend $gap={-2}><LegendName><Text>净额(万元)</Text></LegendName></Legend>
    <Legend>
      <LegendName>分类</LegendName>
      <Cells>
        <Tint $color={RED}>散户</Tint>
        <Tint $color={RED}>中户</Tint>
        <Tint $color={CYAN}>大户</Tint>
        <Tint $color={CYAN}>超大</Tint>
      </Cells>
    </Legend>
  </FundPanel>
);

const RatioPanel = () => (
  <FundPanel $height={183} $last>
    <TitleBar $split>
      <Title>深市超赢分类统计</Title>
      <FundButton type="button">设</FundButton>
    </TitleBar>
    <DateLine><Text>时间：2026/03/20</Text></DateLine>
    <FundBody $gap={19}>
      <FundScale $rows="26px 25px 25px 16px">
        {["75", "50", "25", "0"].map((l) => <span key={l}><Latin>{l}</Latin></span>)}
      </FundScale>
      <FundPlot $height={78}>
        <Canvas viewBox="0 0 402 78" preserveAspectRatio="none">
          <path d="M2 1.5H402M2 27.5H402M2 52.5H402" stroke={RED} strokeDasharray="1 1" />
          <path d="M2 77.5H402" stroke={RED} />
          <Cylinder slot={0} top={0} bottom={77} shade="green" />
          <Cylinder slot={1} top={26} bottom={77} shade="blue" />
          <path d="M1 .5h4M25 .5h6" stroke={YELLOW} />
        </Canvas>
        <Tags>
          <Tag $color={RED} $top={-17}><Latin>+0.32%</Latin></Tag>
          <Tag $color={RED} $top={9}><Latin>+0.10%</Latin></Tag>
        </Tags>
      </FundPlot>
    </FundBody>
    <Legend $gap={1}>
      <LegendName><Text>比例%</Text></LegendName>
      <Cells>
        <Tint $color={LIME}><Text>75.90</Text></Tint>
        <Tint $color={BLUE}><Text>50.83</Text></Tint>
        <Tint $color={CYAN}><Text>-12.24</Text></Tint>
        <Tint $color={RED}><Text>-14.48</Text></Tint>
      </Cells>
    </Legend>
    <AxisRuler gap={1} />
    <Legend $gap={4}>
      <LegendName>分类</LegendName>
      <Cells>
        <Tint $color={LIME}>散户</Tint>
        <Tint $color={BLUE}>中户</Tint>
        <Tint $color={CYAN}>大户</Tint>
        <Tint $color={RED}>超大</Tint>
      </Cells>
    </Legend>
  </FundPanel>
);

const App = () => {
  return (
    <Page>
      <GlobalStyle />
      <Left>
        <PricePanel />
        <VolumePanel />
        <FlowPanel />
        <MainHoldPanel />
        <RetailHoldPanel />
        <ActivePanel />
        <ResearchPanel />
        <TimeAxis />
      </Left>
      <Right>
        <OrderStats />
        <Trend />
        <NetPanel />
        <RatioPanel />
      </Right>
    </Page>
  )
}

export default App
